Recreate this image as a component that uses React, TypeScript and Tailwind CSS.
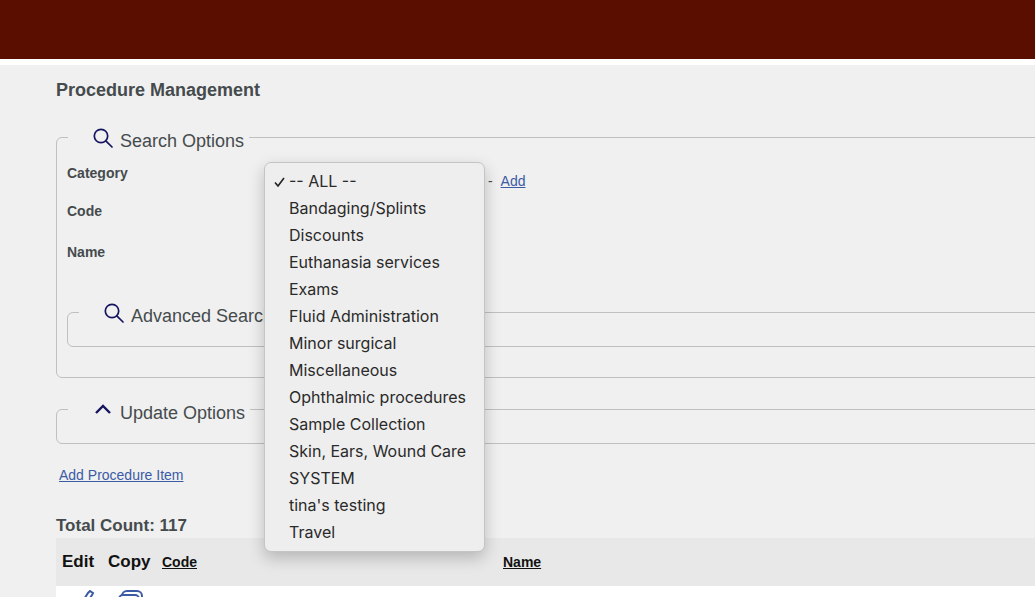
const categories = [
  "Bandaging/Splints",
  "Discounts",
  "Euthanasia services",
  "Exams",
  "Fluid Administration",
  "Minor surgical",
  "Miscellaneous",
  "Ophthalmic procedures",
  "Sample Collection",
  "Skin, Ears, Wound Care",
  "SYSTEM",
  "tina's testing",
  "Travel",
];

function SearchIcon() {
  return (
    <svg width="20" height="20" viewBox="0 0 20 20" fill="none" stroke="#14145f" strokeWidth="1.7" strokeLinecap="round">
      <circle cx="8" cy="8" r="6.7" />
      <path d="M12.8 12.8 L19 19" />
    </svg>
  );
}

function ChevronUp() {
  return (
    <svg width="18" height="12" viewBox="0 0 18 12" fill="none" stroke="#14145f" strokeWidth="2.4">
      <path d="M2 10 L9 3 L16 10" />
    </svg>
  );
}

function Legend({ icon, label, iconClass }: { icon: React.ReactNode; label: string; iconClass: string }) {
  return (
    <div className="absolute left-[11px] top-[-9px] flex h-[24px] items-center bg-[#f0f0f0] pl-[52px] pr-[5px]">
      <span className={`absolute ${iconClass}`}>{icon}</span>
      <span className="text-[18px] leading-[24px] text-[#454b4d]">{label}</span>
    </div>
  );
}

function CategoryMenu() {
  return (
    <div className="absolute left-[264px] top-[162px] z-10 h-[390px] w-[221px] rounded-[7px] border border-[#c4c4c4] bg-[#eeeeee] pt-[5px] font-['Inter',sans-serif] shadow-[0_6px_16px_rgba(0,0,0,0.22)]">
      <div className="relative h-[27px] pl-[24px] text-[16px] leading-[27px] text-[#2a2a2a]">
        <svg className="absolute left-[9px] top-[9px]" width="11" height="10" viewBox="0 0 11 10" fill="none" stroke="#222222" strokeWidth="1.6">
          <path d="M1 5.5 L4 9 L10 1" />
        </svg>
        -- ALL --
      </div>
      {categories.map((c) => (
        <div key={c} className="h-[27px] pl-[24px] text-[16px] leading-[27px] text-[#2a2a2a]">
          {c}
        </div>
      ))}
    </div>
  );
}

export default function App() {
  return (
    <div className="relative h-[597px] w-[1035px] overflow-hidden bg-[#f0f0f0] font-['Liberation_Sans',Arial,sans-serif]">
      <div className="h-[59px] bg-[#5a0e00]" />
      <div className="h-[6px] bg-white" />

      <div className="pl-[56px]">
        <h1 className="mt-[14px] text-[18px] font-bold leading-[22px] text-[#454b4d]">Procedure Management</h1>

        <div className="relative mt-[36px] h-[241px] w-[1100px] rounded-[6px] border border-[#c0c0c0]">
          <Legend icon={<SearchIcon />} label="Search Options" iconClass="left-[25px] top-[-1px]" />
          <div className="pl-[10px] text-[14px] font-bold text-[#454b4d]">
            <div className="pt-[26px] leading-[18px]">Category</div>
            <div className="pt-[20px] leading-[18px]">Code</div>
            <div className="pt-[23px] leading-[18px]">Name</div>
          </div>
          <div className="absolute left-[431px] top-[33px] text-[14px] leading-[20px] text-[#454b4d]">
            -{" "}
            <a className="ml-[4px] text-[#3b5ba5] underline">Add</a>
          </div>
          <div className="relative ml-[10px] mt-[51px] h-[35px] rounded-[6px] border border-[#c0c0c0]">
            <Legend icon={<SearchIcon />} label="Advanced Search" iconClass="left-[25px] top-[-1px]" />
          </div>
        </div>

        <div className="relative mt-[31px] h-[35px] w-[1100px] rounded-[6px] border border-[#c0c0c0]">
          <Legend icon={<ChevronUp />} label="Update Options" iconClass="left-[26px] top-[2px]" />
        </div>

        <a className="ml-[3px] mt-[22px] block text-[14px] leading-[18px] text-[#3b5ba5] underline">Add Procedure Item</a>

        <div className="mt-[31px] text-[17px] font-bold leading-[22px] text-[#454b4d]">Total Count: 117</div>

        <div className="mt-[1px] flex h-[48px] w-[1100px] items-center bg-[#e8e8e8] text-[#111111]">
          <span className="ml-[6px] w-[46px] text-[17px] font-bold">Edit</span>
          <span className="w-[54px] text-[17px] font-bold">Copy</span>
          <span className="w-[341px] text-[14px] font-bold underline">Code</span>
          <span className="text-[14px] font-bold underline">Name</span>
        </div>
        <div className="flex h-[20px] w-[1100px] bg-white">
          <svg className="ml-[24px] mt-[4px]" width="18" height="16" viewBox="0 0 18 16" fill="none" stroke="#3b5ba5" strokeWidth="2">
            <path d="M1 14 L8 3 L10 1 L13 3 L12 5 L5 16" />
          </svg>
          <svg className="ml-[20px] mt-[4px]" width="26" height="16" viewBox="0 0 26 16" fill="none" stroke="#3b5ba5" strokeWidth="2">
            <rect x="4" y="1" width="20" height="18" rx="5" />
            <rect x="1" y="5" width="20" height="16" rx="4" fill="white" />
          </svg>
        </div>
      </div>

      <CategoryMenu />
    </div>
  );
}
